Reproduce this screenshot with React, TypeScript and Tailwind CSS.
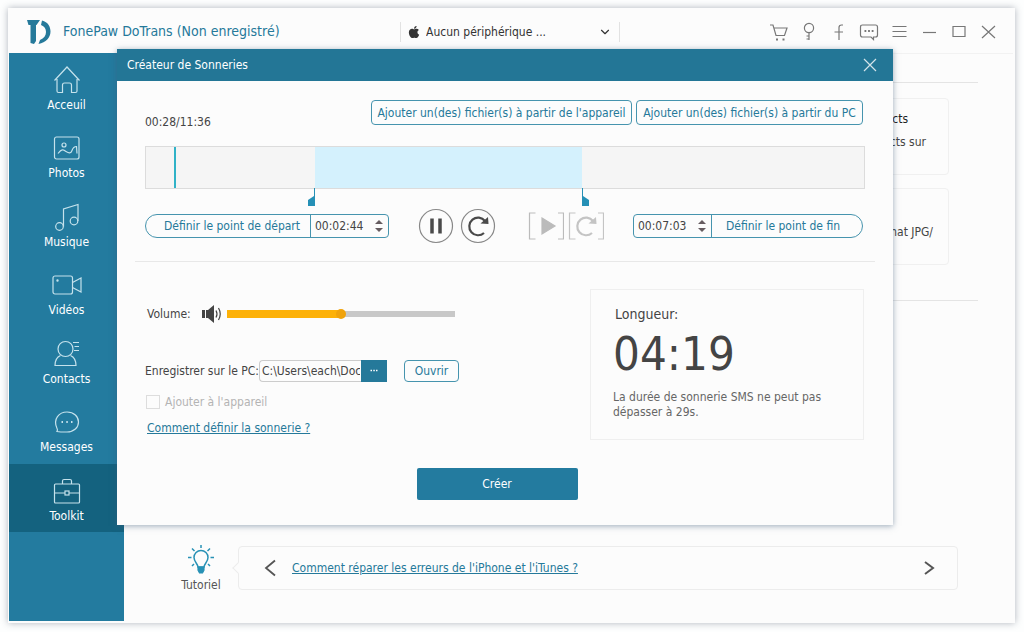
import { useState, type ReactNode } from 'react';
import { FaApple } from 'react-icons/fa';
import { ChevronDown } from 'lucide-react';

const TOTAL = 696;

const Icon = ({
  children,
  className = 'size-5',
  box = '0 0 20 20',
}: {
  children: ReactNode;
  className?: string;
  box?: string;
}) => (
  <svg
    viewBox={box}
    className={className}
    fill="none"
    stroke="currentColor"
    strokeWidth="1.2"
    aria-hidden="true"
  >
    {children}
  </svg>
);

const menu = [
  {
    label: 'Acceuil',
    icon: (
      <path d="M2.500 15.500 15 2l12.500 13.500M5 14v12q0 1.500 1.500 1.500h4V20q0-2 2-2h5q2 0 2 2v7.500h4q1.500 0 1.500-1.500V14" />
    ),
  },
  {
    label: 'Photos',
    icon: (
      <>
        <rect x="2.500" y="4" width="24.500" height="22" rx="2" />
        <circle cx="12" cy="12" r="2" />
        <path d="M6 20.500c4-5 5-4 8-2s5 2 6-1 3-4 4.500-4l.5 7" />
      </>
    ),
  },
  {
    label: 'Musique',
    icon: (
      <>
        <circle cx="7.500" cy="24.500" r="3.800" />
        <circle cx="22" cy="19" r="3.800" />
        <path d="M11.500 24.500V7L26 2.500V19" />
      </>
    ),
  },
  {
    label: 'Vidéos',
    icon: (
      <>
        <rect x="1" y="6" width="19.500" height="18" rx="2" />
        <path d="m20.500 12.500 8.500-4.500v14l-8.500-4.500" />
        <circle cx="5.500" cy="10.500" r=".6" />
      </>
    ),
  },
  {
    label: 'Contacts',
    icon: (
      <>
        <circle cx="13.500" cy="10" r="7.500" />
        <path d="M8.500 16.500C5 18 3 21.500 3 26.500h21c0-5-2-8.500-5.500-10M21 3.500h6M22.500 7.500H27M22 11.500h5" />
      </>
    ),
  },
  {
    label: 'Messages',
    icon: (
      <>
        <path d="M5 24.500c.8-1.200.6-2.300-.2-3.800C1 12 7 5 15 5c7 0 11.500 4.500 11.500 10S22 25 15 25c-3 0-5 .2-10-.5Z" />
        <path d="M9.500 15h1.500M14.300 15h1.500M19 15h1.500" strokeWidth="1.800" />
      </>
    ),
  },
  {
    label: 'Toolkit',
    icon: (
      <>
        <rect x="2.500" y="8" width="25" height="19" rx="1" />
        <path d="M10.500 8V5q0-1.500 1.500-1.500h6q1.500 0 1.500 1.500v3M2.500 17H13M17 17h10.500" />
        <rect x="13" y="15" width="4" height="4" />
      </>
    ),
  },
];

const toolbar = [
  {
    label: 'Boutique',
    icon: (
      <>
        <path d="M1 3h3l3 10.500h8.500L18 6H5" />
        <path d="M7 17.500h2M13.500 17.500h2" strokeWidth="2" />
      </>
    ),
  },
  {
    label: 'Enregistrement',
    icon: (
      <>
        <circle cx="10" cy="6" r="4.600" />
        <path d="M10 10.500V18M7.500 14H10M7.500 17H10" />
      </>
    ),
  },
  {
    label: 'Facebook',
    icon: <path d="M14 3h-1.500Q10 3 10 5.500V18M5.500 10h8.500" />,
  },
  {
    label: 'Commentaires',
    icon: (
      <>
        <path d="M3.500 3h13q2 0 2 2v8q0 2-2 2h-2v2.500L12 15H3.500q-2 0-2-2V5q0-2 2-2Z" />
        <path d="M5.500 9h1.800M9.100 9h1.800M12.700 9h1.800" strokeWidth="1.800" />
      </>
    ),
  },
  { label: 'Menu', icon: <path d="M3.500 4.500h14M3.500 9.500h14M3.500 14.500h14" /> },
  { label: 'Réduire', icon: <path d="M4 10.500h13" /> },
  { label: 'Agrandir', icon: <path d="M4 4.500h12v10H4Z" /> },
  { label: 'Fermer', icon: <path d="m3 4 13 12M16 4 3 16" /> },
];

const Header = () => (
  <header className="flex h-[45px] items-center pt-[2px] pr-[14px]">
    <div className="flex w-[391px] items-center gap-3 pl-[18px] text-[#25799a]">
      <svg viewBox="0 0 24 26" className="h-[26px] w-6" aria-hidden="true">
        <path
          fill="currentColor"
          d="M0 1h13l-3.500 5H9v16l-2 3-3.500-1V6H1.500ZM15 1.500c6 1.500 8.500 6 8.500 11 0 6-4.500 11-12 12.500l1.500-4c4-1.500 6-4.500 6-8 0-3.500-1.500-5.500-5-7Z"
        />
      </svg>
      <h1 className="text-[14px] whitespace-nowrap">
        FonePaw DoTrans (Non enregistré)
      </h1>
    </div>
    <div className="relative flex h-5 w-[220px] items-center border-x border-[#e2e2e2]">
      <FaApple size={14} className="absolute left-[6px] text-[#333]" />
      <select
        aria-label="Périphérique"
        className="w-full appearance-none pl-[25px] text-[12px] text-[#333]"
      >
        <option>Aucun périphérique ...</option>
      </select>
      <ChevronDown
        size={14}
        className="pointer-events-none absolute right-[7px] text-[#333]"
      />
    </div>
    <div className="ml-auto flex gap-[10px] text-[#777]">
      {toolbar.map((item) => (
        <button key={item.label} aria-label={item.label} className="size-5">
          <Icon>{item.icon}</Icon>
        </button>
      ))}
    </div>
  </header>
);

const Sidebar = () => (
  <nav className="w-[115px] shrink-0 bg-[#237b9f]">
    <div className="flex h-[479px] flex-col">
      {menu.map((item) => (
        <a
          key={item.label}
          href="#"
          className={`flex flex-1 flex-col items-center pt-3 text-[12px] leading-4 text-white ${
            item.label === 'Toolkit' && 'bg-[#14627f]'
          }`}
        >
          <Icon box="0 0 30 30" className="mb-[2px] size-[30px] shrink-0 text-[#c5e2ec]">
            {item.icon}
          </Icon>
          {item.label}
        </a>
      ))}
    </div>
  </nav>
);

const Tutorial = () => (
  <div className="mt-auto mr-[55px] mb-7 ml-[55px] flex items-center">
    <div className="flex w-[44px] flex-col items-center pt-[2px] text-[12px] leading-4 text-[#555]">
      <Icon box="0 0 26 30" className="mb-[2px] h-[30px] w-[26px] text-[#2791b5]">
        <path
          d="M10 22c0-3-4-5-4-9.500a7 7 0 0 1 14 0c0 4.500-4 6.500-4 9.500ZM13 0v3M4 3.500l2.500 2.500M22 3.500 19.500 6M0 12.500h3.500M22.500 12.500H26M4 21l2-2M22 21l-2-2"
          strokeWidth="1.500"
        />
        <path d="M10 22h6v3l-1.500 3h-3L10 25Z" fill="currentColor" />
      </Icon>
      Tutoriel
    </div>
    <div className="relative ml-[15px] flex h-11 flex-1 items-center rounded-sm border border-[#ececec] pr-[18px] pl-[21px] text-[#555]">
      <span className="absolute -left-[5px] size-2 rotate-45 border-b border-l border-[#ececec] bg-[#fcfcfc]" />
      <button aria-label="Précédent">
        <Icon className="h-5 w-5">
          <path d="m15 2.500-9 7.500 9 7.500" strokeWidth="1.800" />
        </Icon>
      </button>
      <a href="#" className="ml-3 text-[12px] text-[#25799a] underline">
        Comment réparer les erreurs de l'iPhone et l'iTunes ?
      </a>
      <button aria-label="Suivant" className="ml-auto">
        <Icon className="h-5 w-5">
          <path d="m6 4 8 6-8 6" strokeWidth="2" />
        </Icon>
      </button>
    </div>
  </div>
);

const Tools = () => (
  <main className="flex min-w-0 flex-1 flex-col border-t border-[#f2f2f2] text-[12px] text-[#444]">
    <section className="mt-7 mr-[35px] ml-5 flex flex-col gap-[13px] border-y border-[#e4e4e4] pt-[15px] pr-[29px] pb-[35px] text-right">
      <article className="h-[77px] rounded-sm border border-[#f0f0f0] pt-3">
        <h2 className="mr-10 leading-4 text-[#222]">Contacts</h2>
        <p className="mt-[7px] mr-[22px] leading-4">Contacts sur</p>
      </article>
      <article className="h-[77px] rounded-sm border border-[#f0f0f0] pt-[35px]">
        <p className="mr-[15px] leading-4">format JPG/</p>
      </article>
    </section>
    <Tutorial />
  </main>
);

const Reload = () => (
  <>
    <path d="M25 13A8.800 8.800 0 1 0 24 25" strokeWidth="2.200" />
    <path d="m28 9 .5 7-8-.5Z" fill="currentColor" stroke="none" />
  </>
);

const Timeline = ({ start, end }: { start: number; end: number }) => {
  const pct = (seconds: number) => `${(seconds / TOTAL) * 100}%`;

  return (
    <div className="relative mt-[21px] h-[43px] border border-[#dcdcdc] bg-[#f5f5f5]">
      <div
        className="absolute inset-y-0 bg-[#d4f1fd]"
        style={{ left: pct(start), width: pct(end - start) }}
      />
      <div
        className="absolute inset-y-0 w-[2px] -translate-x-1/2 bg-[#30b2c7]"
        style={{ left: pct(28) }}
      />
      <svg
        viewBox="0 0 8 18"
        className="absolute top-[41px] h-[18px] w-2 -translate-x-full text-[#2590b6]"
        style={{ left: pct(start) }}
      >
        <path d="M7 0h1v18H1v-6l6-4Z" fill="currentColor" />
      </svg>
      <svg
        viewBox="0 0 8 18"
        className="absolute top-[41px] h-[18px] w-2 text-[#2590b6]"
        style={{ left: pct(end) }}
      >
        <path d="M1 0H0v18h7v-6L1 8Z" fill="currentColor" />
      </svg>
    </div>
  );
};

const TimeInput = ({ label, value }: { label: string; value: string }) => (
  <div className="flex w-[77px] items-center justify-between pr-[5px] pl-1">
    <input
      aria-label={label}
      defaultValue={value}
      className="w-[56px] text-[12px] text-[#444] outline-none"
    />
    <svg viewBox="0 0 8 12" className="h-3 w-2 text-[#665c60]" aria-hidden="true">
      <path d="M0 4 4 0l4 4ZM0 8l4 4 4-4Z" fill="currentColor" />
    </svg>
  </div>
);

const Controls = () => (
  <div className="mt-[19px] mr-[2px] flex items-center justify-between text-[12px] text-[#25799a]">
    <div className="flex h-6 w-[244px] rounded-l-xl rounded-r-sm border border-[#4694ae]">
      <button className="flex-1 border-r border-[#4694ae] pl-2">
        Définir le point de départ
      </button>
      <TimeInput label="Début" value="00:02:44" />
    </div>
    <div className="flex items-center text-[#4a4a4a]">
      <button aria-label="Pause" className="mr-[6px]">
        <Icon box="0 0 36 36" className="size-9">
          <circle cx="18" cy="18" r="16.500" stroke="#888" />
          <path d="M14 10.500v15M22 10.500v15" strokeWidth="3.500" />
        </Icon>
      </button>
      <button aria-label="Rejouer">
        <Icon box="0 0 36 36" className="size-9">
          <circle cx="18" cy="18" r="16.500" stroke="#888" />
          <Reload />
        </Icon>
      </button>
      <button aria-label="Lire la sélection" className="ml-8 text-[#bbb]">
        <Icon box="0 0 36 36" className="size-9">
          <path d="M7.500 5h-6v26h6M30 5h5.500v26H30" />
          <path d="m14 10 13 8-13 8Z" fill="currentColor" />
        </Icon>
      </button>
      <button aria-label="Rejouer la sélection" className="ml-1 text-[#c4c4c4]">
        <Icon box="0 0 36 36" className="size-9">
          <path d="M7.500 5h-6v26h6M30 5h5.500v26H30" />
          <Reload />
        </Icon>
      </button>
    </div>
    <div className="flex h-6 w-[230px] rounded-l-sm rounded-r-xl border border-[#4694ae]">
      <TimeInput label="Fin" value="00:07:03" />
      <button className="flex-1 border-l border-[#4694ae] pr-2">
        Définir le point de fin
      </button>
    </div>
  </div>
);

const Options = () => {
  const [volume, setVolume] = useState(50);

  return (
    <div className="w-[314px] text-[12px] text-[#444]">
      <div className="mt-[14px] flex h-[22px] w-[310px] items-center">
        <label htmlFor="volume" className="w-[56px] pl-[2px]">
          Volume:
        </label>
        <Icon box="0 0 22 20" className="h-5 w-[22px] text-[#444]">
          <path d="M1 6h3v8H1ZM5 6h2l6-5v18l-6-5H5Z" fill="currentColor" stroke="none" />
          <path d="M15 6.500q2 3.500 0 7M17.500 4q3.500 6 0 12" />
        </Icon>
        <div className="relative ml-1 flex h-5 flex-1 items-center">
          <div className="absolute inset-x-0 h-[6px] bg-[#c8c8c8]" />
          <div className="absolute h-2 bg-[#fdb108]" style={{ width: `${volume}%` }} />
          <input
            id="volume"
            type="range"
            value={volume}
            onChange={(e) => setVolume(Number(e.target.value))}
            className="relative h-5 w-full appearance-none bg-transparent [&::-webkit-slider-thumb]:size-[10px] [&::-webkit-slider-thumb]:appearance-none [&::-webkit-slider-thumb]:rounded-full [&::-webkit-slider-thumb]:bg-[#f0a30c]"
          />
        </div>
      </div>
      <div className="mt-[35px] flex h-[22px] items-center">
        <label htmlFor="path" className="w-[114px] whitespace-nowrap">
          Enregistrer sur le PC:
        </label>
        <input
          id="path"
          defaultValue="C:\Users\each\Documents"
          className="h-[22px] w-[102px] rounded-l-sm border border-r-0 border-[#ccc] pr-[1px] pl-[2px] outline-none"
        />
        <button
          aria-label="Parcourir"
          className="flex h-[22px] w-[26px] items-center justify-center bg-[#25799a] text-white"
        >
          <Icon className="size-5">
            <path d="M6.500 9.500h1.500M9.300 9.500h1.500M12 9.500h1.500" strokeWidth="1.500" />
          </Icon>
        </button>
        <button className="ml-[17px] h-[22px] w-[55px] rounded-sm border border-[#4694ae] text-[#25799a]">
          Ouvrir
        </button>
      </div>
      <label className="mt-3 flex h-4 items-center gap-[5px] pl-[1px] text-[#b4b4b4]">
        <input
          type="checkbox"
          disabled
          className="size-[14px] appearance-none border border-[#ddd]"
        />
        Ajouter à l'appareil
      </label>
      <a href="#" className="mt-[10px] ml-[2px] block leading-4 text-[#25799a] underline">
        Comment définir la sonnerie ?
      </a>
    </div>
  );
};

const RingtoneDialog = () => (
  <div
    role="dialog"
    aria-label="Créateur de Sonneries"
    className="absolute top-[41px] right-[122px] left-[109px] bg-[#fcfcfc] pb-[25px] shadow-[0_1px_6px_rgba(60,90,120,0.5)]"
  >
    <div className="flex h-8 items-center justify-between bg-[#237696] pr-[13px] pl-[10px] text-[12px] text-white">
      <h2>Créateur de Sonneries</h2>
      <button aria-label="Fermer" className="text-white/80">
        <Icon>
          <path d="m4 4 12 12M16 4 4 16" />
        </Icon>
      </button>
    </div>
    <div className="px-7 pt-[19px]">
      <div className="mr-[2px] flex h-[25px] items-stretch gap-1 text-[12px] text-[#25799a]">
        <p className="mt-[14px] mr-auto leading-4 text-[#444]">00:28/11:36</p>
        <button className="w-[261px] rounded-sm border border-[#4694ae]">
          Ajouter un(des) fichier(s) à partir de l'appareil
        </button>
        <button className="w-[227px] rounded-sm border border-[#4694ae]">
          Ajouter un(des) fichier(s) à partir du PC
        </button>
      </div>
      <Timeline start={164} end={423} />
      <Controls />
      <hr className="-mx-[10px] mt-[17px] border-[#e8e8e8]" />
      <div className="mt-[27px] mr-[1px] flex items-start justify-between">
        <Options />
        <section className="h-[151px] w-[274px] border border-[#efefef] px-[22px] pt-4 text-[#444]">
          <h3 className="ml-[2px] text-[14px] leading-4">Longueur:</h3>
          <p className="mt-2 text-[47px] leading-[48px]">04:19</p>
          <p className="mt-3 text-[12px] leading-[15px] text-[#666]">
            La durée de sonnerie SMS ne peut pas dépasser à 29s.
          </p>
        </section>
      </div>
      <div className="mt-7 mr-4 flex justify-center">
        <button className="h-8 w-[161px] rounded-[2px] bg-[#237b9f] text-[12px] text-white">
          Créer
        </button>
      </div>
    </div>
  </div>
);

const App = () => (
  <div className="flex min-h-screen bg-[#fdfefe] pt-2 pr-[9px] pb-[9px] pl-2 font-['DejaVu_Sans_Condensed','DejaVu_Sans',sans-serif]">
    <div className="relative flex flex-1 flex-col bg-[#fcfcfc] pr-[2px] pb-[2px] pl-[1px] shadow-[0_0_7px_rgba(60,70,90,0.4)]">
      <Header />
      <div className="flex flex-1">
        <Sidebar />
        <Tools />
      </div>
      <RingtoneDialog />
    </div>
  </div>
);

export default App;
